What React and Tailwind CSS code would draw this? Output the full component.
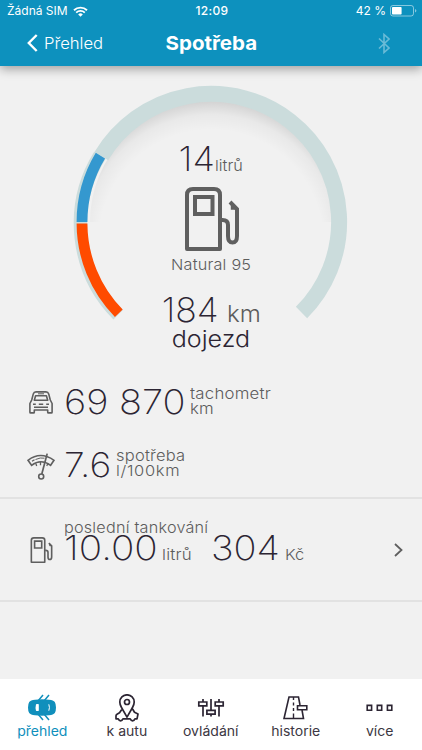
import React from "react";

const SANS = "font-['Inter','Liberation_Sans',sans-serif]";

function WifiIcon() {
  return (
    <svg className="w-[15px] h-[11px]" viewBox="0 0 15 11" fill="none" stroke="white">
      <path d="M1 4.2a9.4 9.4 0 0 1 13 0" strokeWidth="1.9" />
      <path d="M3.2 6.6a6.2 6.2 0 0 1 8.6 0" strokeWidth="1.8" />
      <path d="M5.2 8.4a3.4 3.4 0 0 1 4.6 0L7.5 10.8z" fill="white" stroke="none" />
    </svg>
  );
}

function BatteryIcon() {
  return (
    <svg className="w-[27px] h-[12px]" viewBox="0 0 27 12" fill="none">
      <rect x="0.5" y="0.5" width="23" height="10.5" rx="2.4" stroke="white" strokeOpacity="0.5" />
      <rect x="2" y="2" width="9.6" height="7.5" rx="0.8" fill="white" />
      <path d="M25 4v3.6q1.4-.5 1.4-1.8T25 4z" fill="white" fillOpacity="0.5" />
    </svg>
  );
}

function PumpIcon({ className, strokeWidth = 4 }) {
  return (
    <svg className={className} viewBox="0 0 54 64" fill="none" stroke="#5f5f5f" strokeWidth={strokeWidth}>
      <path d="M2 62V8q0-6 6-6H29q6 0 6 6V62z" strokeLinejoin="round" />
      <path d="M10 10h17.5v17H10z" />
      <path d="M36 33h1.500q5.500 0 5.500 5v11q0 6.500 4.500 6.500t4.500-6.500V22L45 15" />
      <path d="M47 16v5.500h5" strokeWidth={strokeWidth * 0.6} />
    </svg>
  );
}

function CarIcon() {
  return (
    <svg className="w-[24px] h-[23px]" viewBox="0 0 24 23" fill="none" stroke="#5f5f5f" strokeWidth="1.6" strokeLinejoin="round">
      <path d="M.9 21.200V12.500L2.700 9 4.300 2.900Q4.900.9 7 .9h10q2.100 0 2.700 2l1.600 6.100 1.800 3.500v8.700q0 .7-.7.7h-3q-.7 0-.7-.7v-2.200H5.300v2.200q0 .7-.7.7h-3q-.7 0-.7-.7z" />
      <path d="M6.600 4.700h10.800l1.300 4.500H5.300z" />
      <path d="M4 13.300h2.800M17.200 13.300H20M9.800 13.300h4.400M5 16.300h14" />
      <path d="M9 2.800h6" strokeWidth="1" />
    </svg>
  );
}

function ConsumptionIcon() {
  return (
    <svg className="w-[28px] h-[27px]" viewBox="0 0 28 27" fill="none" stroke="#5f5f5f" strokeWidth="1.600">
      <path d="M1 7.300Q13.500-2.300 27 7.300L23.600 12.300Q13.800 5.300 4.600 12.300z" />
      <path d="M8.700 10.300l1 2.600M13.500 9v3.300M21 10.500l-1.300 2.400M5 8.300l2.500-1.500" strokeWidth="1.300" />
      <path d="M8.500 6.500q5-2.300 9-1.300" strokeWidth="1" />
      <path d="M20.200.6L14.800 21" strokeWidth="1.700" />
      <circle cx="14.200" cy="23.500" r="2.500" />
    </svg>
  );
}

function OverviewIcon() {
  return (
    <svg className="w-[30px] h-[27px]" viewBox="0 0 30 27" fill="none">
      <path d="M8 5.700Q15 4.900 22 5.700q4.500.4 5.800 2.300 1.200 2 1.200 5.500t-1.200 5.500q-1.300 1.900-5.800 2.300-7 .8-14 0-4.400-.4-5.800-2.300Q1 17 1 13.500T2.200 8Q3.600 6.100 8 5.700z" fill="#108fbc" />
      <path d="M11 7l5-6M17 7l5-6M11 20l5 6M17 20l5 6" stroke="#108fbc" strokeWidth="1.500" />
      <path d="M9 10.200q1.400-.5 2.800 0v6.600q-1.400.5-2.800 0-.9-3.300 0-6.600z" fill="white" />
      <path d="M21.800 10.300q1.300 3.200 0 6.400" stroke="white" strokeWidth="1" />
    </svg>
  );
}

function LocateIcon() {
  return (
    <svg className="w-[24px] h-[28px]" viewBox="0 0 24 28" fill="none" stroke="#2c2533" strokeWidth="1.700" strokeLinejoin="round">
      <path d="M12 23.200L6.500 13.500Q4.800 10.500 4.800 8a7.200 7.200 0 0 1 14.400 0q0 2.500-1.700 5.500z" />
      <circle cx="12" cy="8" r="2.500" />
      <path d="M6.800 15.500L4.500 18.800 2 20.200q-1.200.7-1 2.300v2.300h2.200q.8 2 2.400 2t2.400-2h7.200q.8 2 2.400 2t2.400-2h2l1-4.800-3.500-1.700-1.800-3.100q-.3-.6-1-.6" />
    </svg>
  );
}

function ControlsIcon() {
  return (
    <svg className="w-[28px] h-[20px]" viewBox="0 0 28 20" fill="none" stroke="#2c2533" strokeWidth="1.700">
      <path d="M1.800 4h8v3.800h-8zM9.900 12.300h8.200v3.800H9.900zM18.200 4h8v3.800h-8z" />
      <path d="M6 1v3M6 7.800V18.500M14 1v11.300M14 16.100v2.400M22 1v3M22 7.800V18.500" />
    </svg>
  );
}

function HistoryIcon() {
  return (
    <svg className="w-[25px] h-[24px]" viewBox="0 0 25 24" fill="none" stroke="#2c2533" strokeWidth="1.600">
      <path d="M17 9L15.500 1H6L1 22.500h19.500L19 14" />
      <path d="M14.500 9.700h9.300v4h-9.300z" />
      <path d="M10.500 1v3M10.500 6.500v3M10.500 12v3M10.500 17.500v5" strokeWidth="1.400" />
    </svg>
  );
}

function MoreIcon() {
  return (
    <svg className="w-[27px] h-[8px]" viewBox="0 0 27 8" fill="none" stroke="#2c2533" strokeWidth="1.600">
      <path d="M1.200 1.400h4.400v4.800H1.200zM11.300 1.400h4.400v4.800h-4.400zM21.400 1.400h4.400v4.800h-4.400z" />
    </svg>
  );
}

// Arc track with the reserve (orange) and current fuel (blue) segments
function GaugeArc() {
  return (
    <svg className="absolute left-0 top-0 w-[422px] h-[290px]" viewBox="0 66 422 290" fill="none">
      <defs>
        <radialGradient id="innerShade" gradientUnits="userSpaceOnUse" cx="211" cy="242" r="140">
          <stop offset="0.8" stopColor="#000" stopOpacity="0" />
          <stop offset="0.91" stopColor="#000" stopOpacity="0.035" />
          <stop offset="1" stopColor="#000" stopOpacity="0.12" />
        </radialGradient>
      </defs>
      <path d="M90 222A121 121 0 0 1 332 222z" fill="url(#innerShade)" />
      <path d="M101.300 156.100A128 128 0 1 1 301.500 312.500" stroke="#cbdcdc" strokeWidth="16" />
      <path d="M118.200 314.800A129.600 129.600 0 0 1 99.900 155.200" stroke="#cbdcdc" strokeWidth="13.500" />
      <path d="M118.800 313.300A129 129 0 0 1 82 223.600" stroke="#ff4b00" strokeWidth="10.800" />
      <path d="M82 222A129 129 0 0 1 100.400 155.600" stroke="#3498cf" strokeWidth="10.800" />
    </svg>
  );
}

const tabs = [
  { label: "přehled", icon: OverviewIcon, active: true },
  { label: "k autu", icon: LocateIcon },
  { label: "ovládání", icon: ControlsIcon },
  { label: "historie", icon: HistoryIcon },
  { label: "více", icon: MoreIcon },
];

export default function App() {
  return (
    <div className={`w-[422px] h-[750px] bg-[#f1f1f1] flex flex-col overflow-hidden text-[#5c5c5c] font-light ${SANS}`}>
      {/* Header */}
      <header className="h-[66px] shrink-0 bg-[#0d91be] text-white shadow-[0_3px_10px_rgba(0,0,0,0.35)] z-10">
        <div className="h-[22px] grid grid-cols-3 items-center text-[12px] leading-[22px] font-normal pl-[7px] pr-[5px]">
          <div className="flex items-center gap-[5px]">
            <span>Žádná SIM</span>
            <WifiIcon />
          </div>
          <span className="text-center font-medium tracking-[0.3px]">12:09</span>
          <div className="flex items-center justify-end gap-[4px]">
            <span>42 %</span>
            <BatteryIcon />
          </div>
        </div>
        <div className="h-[42px] grid grid-cols-3 items-center">
          <div className="flex items-center pl-[27px] gap-[6px]">
            <svg className="w-[11px] h-[18px]" viewBox="0 0 11 18" fill="none" stroke="white" strokeWidth="2.400">
              <path d="M9.700 1L1.800 9l7.900 8" />
            </svg>
            <span className="text-[16px] origin-left scale-x-[1.04]">Přehled</span>
          </div>
          <h1 className="text-center pt-[2px] text-[19px] leading-[24px] font-bold scale-x-[1.08]">Spotřeba</h1>
          <div className="flex justify-end pr-[32px]">
            <svg className="w-[12px] h-[21px]" viewBox="0 0 12 21" fill="none" stroke="white" strokeOpacity="0.38" strokeWidth="1.600">
              <path d="M1 5.500l10 9.500-5 4.500V1.500L11 6 1 15.500" />
            </svg>
          </div>
        </div>
      </header>

      {/* Fuel gauge */}
      <section className="relative h-[304px] shrink-0 flex flex-col items-center">
        <GaugeArc />
        <div className="relative mt-[76px] h-[34px] flex items-baseline leading-[34px] scale-x-[1.08]">
          <span className="text-[34px] font-extralight text-[#2c2533]">14</span>
          <span className="text-[15px]">litrů</span>
        </div>
        <PumpIcon className="relative w-[54px] h-[64px] mt-[11px] ml-[2px]" />
        <span className="relative mt-[6px] text-[15px] leading-[15px] tracking-[0.2px] scale-x-[1.08]">Natural 95</span>
        <div className="relative mt-[21px] h-[34px] flex items-baseline gap-[8px] leading-[34px] scale-x-[1.05]">
          <span className="text-[34px] font-extralight text-[#2c2533]">184</span>
          <span className="text-[23px]">km</span>
        </div>
        <span className="relative text-[23px] leading-[24px] scale-x-[1.09] text-[#2c2533]">dojezd</span>
      </section>

      {/* Odometer */}
      <section className="h-[61px] shrink-0 flex items-start pl-[29px] pt-[15px]">
        <div className="w-[35px] pt-[6px]">
          <CarIcon />
        </div>
        <span className="w-[126px] text-[34px] leading-[34px] font-extralight text-[#2c2533] whitespace-nowrap origin-left scale-x-[1.12]">
          69 870
        </span>
        <p className="pt-[1px] text-[15px] leading-[15px] tracking-[0.2px] origin-left scale-x-[1.12]">
          tachometr
          <br />
          km
        </p>
      </section>

      {/* Consumption */}
      <section className="h-[68px] shrink-0 flex items-start pl-[27px] pt-[17px] border-b-2 border-[#e2e2e2]">
        <div className="w-[37px] pt-[5px]">
          <ConsumptionIcon />
        </div>
        <span className="w-[52px] text-[34px] leading-[34px] font-extralight text-[#2c2533] origin-left scale-x-[1.1]">7.6</span>
        <p className="text-[15px] leading-[15px] tracking-[0.2px] origin-left scale-x-[1.1]">
          spotřeba
          <br />
          <span className="tracking-[0.6px]">l/100km</span>
        </p>
      </section>

      {/* Last refuelling */}
      <section className="h-[103px] shrink-0 flex items-start pl-[30px] pr-[19px] border-b-2 border-[#e2e2e2]">
        <PumpIcon className="w-[23px] h-[26px] mt-[38px]" strokeWidth={4} />
        <div className="flex-1 pl-[11px] pt-[21px]">
          <p className="text-[15px] leading-[15px] tracking-[0.2px] origin-left scale-x-[1.08]">poslední tankování</p>
          <div className="-mt-[4px] flex items-baseline leading-[34px] whitespace-nowrap">
            <span className="w-[98px] text-[34px] font-extralight text-[#2c2533] origin-left scale-x-[1.14]">10.00</span>
            <span className="w-[49px] text-[15px] tracking-[0.2px] origin-left scale-x-[1.12]">litrů</span>
            <span className="w-[74px] text-[34px] font-extralight text-[#2c2533] origin-left scale-x-[1.12]">304</span>
            <span className="text-[15px] origin-left scale-x-[1.1]">Kč</span>
          </div>
        </div>
        <svg className="w-[9px] h-[14px] mt-[44px]" viewBox="0 0 9 14" fill="none" stroke="#5f5f5f" strokeWidth="1.800">
          <path d="M1 1l6.500 6L1 13" />
        </svg>
      </section>

      {/* Tab bar */}
      <nav className="mt-auto h-[71px] shrink-0 bg-white grid grid-cols-5">
        {tabs.map(({ label, icon: Icon, active }) => (
          <div
            key={label}
            className={`flex flex-col items-center pt-[14px] ${active ? "text-[#108fbc]" : "text-[#3c3742]"}`}
          >
            <div className="h-[29px] flex items-center">
              <Icon />
            </div>
            <span className="text-[13px] leading-[18px] font-normal scale-x-[1.08]">{label}</span>
          </div>
        ))}
      </nav>
    </div>
  );
}
